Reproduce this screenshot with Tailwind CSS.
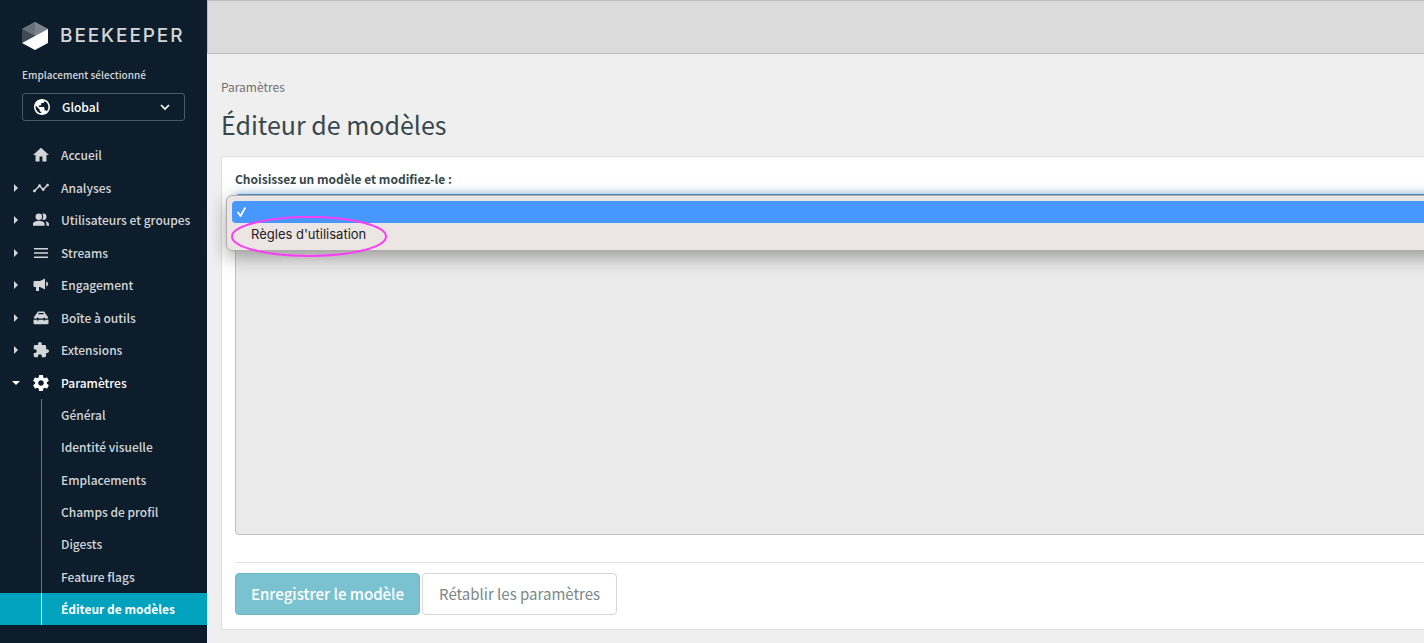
<!DOCTYPE html>
<html lang="fr">
<head>
    <meta charset="utf-8">
    <meta name="viewport" content="width=device-width, initial-scale=1">
    <title>Éditeur de modèles</title>
    <script src="https://cdn.jsdelivr.net/npm/@tailwindcss/browser@4"></script>
</head>
<body class="flex min-h-screen overflow-x-hidden bg-[#efefef] font-['Noto_Sans_CJK_SC',sans-serif]">
<aside class="w-[207px] shrink-0 bg-[#0d1d2b] text-[#d3d6d9]">
    <div class="flex items-center gap-[11px] pt-[21px] pl-[21px]">
        <svg class="w-7 h-[30px] shrink-0" viewBox="0 0 28 30">
            <path fill="#7c838b" d="M14 1 27 8 14 15 1 8z"/>
            <path fill="#69717a" d="M1 8 14 1v14z"/>
            <path fill="#3f4a55" d="M1 8l13 7L1 22z"/>
            <path fill="#7c838b" d="M14 1 27 8 14 15z"/>
            <path fill="#fff" d="M27 8v14L14 29 1 22z"/>
        </svg>
        <span class="font-['Inter',sans-serif] text-[19px] leading-7 font-medium tracking-widest">BEEKEEPER</span>
    </div>
    <div class="px-[22px] pt-4">
        <p class="text-[10px] leading-4 font-medium">Emplacement sélectionné</p>
        <button type="button" class="mt-[10px] flex h-7 w-full items-center rounded-[3px] border border-[#4c5863] pl-[11px] pr-[13px] text-xs leading-5 font-medium text-white">
            <svg class="w-4 h-4" viewBox="2 2 20 20" fill="currentColor"><path d="M12 2C6.480 2 2 6.480 2 12s4.480 10 10 10 10-4.480 10-10S17.520 2 12 2zm-1 17.930c-3.950-.49-7-3.850-7-7.930 0-.62.080-1.210.21-1.790L9 15v1c0 1.100.9 2 2 2v1.930zm6.900-2.540c-.26-.81-1-1.390-1.900-1.390h-1v-3c0-.55-.45-1-1-1H8v-2h2c.55 0 1-.45 1-1V7h2c1.100 0 2-.9 2-2v-.41c2.930 1.190 5 4.060 5 7.410 0 2.080-.8 3.970-2.100 5.390z"/></svg>
            <span class="ml-3 flex-1 text-left">Global</span>
            <svg class="w-3 h-3" viewBox="0 0 12 12" fill="none" stroke="currentColor" stroke-width="1.700"><path d="M2 4l4 4 4-4"/></svg>
        </button>
    </div>
    <nav class="pt-[18px] text-xs leading-5 font-medium">
        <ul class="grid h-[260px] auto-rows-fr">
            <li class="flex">
                <a href="#" class="flex flex-1 items-center pl-[33px]">
                    <svg class="w-4 h-4" viewBox="1 1 22 22" fill="currentColor"><path d="M10 21v-7h4v7h5.500v-9H23L12 2 1 12h3.500v9z"/></svg>
                    <span class="ml-3">Accueil</span>
                </a>
            </li>
            <li class="flex">
                <a href="#" class="flex flex-1 items-center pl-[13px]">
                    <svg class="w-1.5 h-2" viewBox="0 0 6 8" fill="currentColor"><path d="M1 0l4 4-4 4z"/></svg>
                    <svg class="ml-[14px] w-4 h-4" viewBox="1 1 22 22" fill="currentColor"><path d="M23 8c0 1.100-.9 2-2 2-.18 0-.35-.02-.51-.07l-3.560 3.550c.05.16.07.34.07.52 0 1.100-.9 2-2 2s-2-.9-2-2c0-.18.02-.36.07-.52l-2.550-2.550c-.16.05-.34.07-.52.07s-.36-.02-.52-.07l-4.550 4.560c.05.16.07.33.07.51 0 1.100-.9 2-2 2s-2-.9-2-2 .9-2 2-2c.18 0 .35.02.51.07l4.560-4.550C8.020 9.360 8 9.180 8 9c0-1.100.9-2 2-2s2 .9 2 2c0 .18-.02.36-.07.52l2.550 2.550c.16-.05.34-.07.52-.07s.36.02.52.07l3.550-3.560C19.020 8.350 19 8.180 19 8c0-1.100.9-2 2-2s2 .9 2 2z"/></svg>
                    <span class="ml-3">Analyses</span>
                </a>
            </li>
            <li class="flex">
                <a href="#" class="flex flex-1 items-center pl-[13px]">
                    <svg class="w-1.5 h-2" viewBox="0 0 6 8" fill="currentColor"><path d="M1 0l4 4-4 4z"/></svg>
                    <svg class="ml-[14px] w-4 h-4" viewBox="1 1 22 22" fill="currentColor"><circle cx="9" cy="7.500" r="4.500"/><path d="M9 13c-3 0-8 1.500-8 4.500V20h16v-2.500C17 14.500 12 13 9 13zM15 12a4.500 4.500 0 0 0 0-9l-1.200.2c1.600 2.500 1.600 6.100 0 8.600zM17.500 13.300c1.300 1 2 2.400 2 4.200V20H23v-2.500c0-2.300-2.900-3.700-5.500-4.200z"/></svg>
                    <span class="ml-3">Utilisateurs et groupes</span>
                </a>
            </li>
            <li class="flex">
                <a href="#" class="flex flex-1 items-center pl-[13px]">
                    <svg class="w-1.5 h-2" viewBox="0 0 6 8" fill="currentColor"><path d="M1 0l4 4-4 4z"/></svg>
                    <svg class="ml-[14px] w-4 h-4" viewBox="0 0 16 16" fill="currentColor"><path d="M1 3h14v1.500H1zM1 7.300h14v1.500H1zM1 11.600h14v1.500H1z"/></svg>
                    <span class="ml-3">Streams</span>
                </a>
            </li>
            <li class="flex">
                <a href="#" class="flex flex-1 items-center pl-[13px]">
                    <svg class="w-1.5 h-2" viewBox="0 0 6 8" fill="currentColor"><path d="M1 0l4 4-4 4z"/></svg>
                    <svg class="ml-[14px] w-4 h-4" viewBox="0 0 16 16" fill="currentColor"><path d="M1.500 4H7l5-2.500v11L7 10H6v4H3v-4H1.500Q.5 10 .5 9V5q0-1 1-1zM13.200 4.500c2.600.5 2.600 4.500 0 5z"/></svg>
                    <span class="ml-3">Engagement</span>
                </a>
            </li>
            <li class="flex">
                <a href="#" class="flex flex-1 items-center pl-[13px]">
                    <svg class="w-1.5 h-2" viewBox="0 0 6 8" fill="currentColor"><path d="M1 0l4 4-4 4z"/></svg>
                    <svg class="ml-[14px] w-4 h-4" viewBox="0 0 16 16" fill="currentColor"><path fill-rule="evenodd" d="M5 1.500h6L13.500 5q1.500 1 1.700 3.500H12V7.700h-1.500v.8h-5v-.8H4v.8H.8Q1 6 2.500 5zM5.700 3 5 4.200h6L10.300 3z"/><path d="M.5 9.700H4v.9h1.500v-.9h5v.9H12v-.9h3.500V13q0 1.300-1.200 1.300H1.700Q.5 14.300.5 13z"/></svg>
                    <span class="ml-3">Boîte à outils</span>
                </a>
            </li>
            <li class="flex">
                <a href="#" class="flex flex-1 items-center pl-[13px]">
                    <svg class="w-1.5 h-2" viewBox="0 0 6 8" fill="currentColor"><path d="M1 0l4 4-4 4z"/></svg>
                    <svg class="ml-[14px] w-4 h-4" viewBox="1 1 22 22" fill="currentColor"><path d="M20.500 11H19V7c0-1.100-.9-2-2-2h-4V3.500C13 2.120 11.880 1 10.500 1S8 2.120 8 3.500V5H4c-1.100 0-1.990.9-1.990 2v3.800H3.500c1.490 0 2.700 1.210 2.700 2.700s-1.210 2.700-2.700 2.700H2V20c0 1.100.9 2 2 2h3.800v-1.500c0-1.490 1.210-2.700 2.700-2.700s2.700 1.210 2.700 2.700V22H17c1.100 0 2-.9 2-2v-4h1.500c1.380 0 2.500-1.120 2.500-2.500S21.880 11 20.500 11z"/></svg>
                    <span class="ml-3">Extensions</span>
                </a>
            </li>
            <li class="flex">
                <a href="#" class="flex flex-1 items-center pl-3 text-white">
                    <svg class="w-2 h-1" viewBox="0 0 8 4" fill="currentColor"><path d="M0 0h8L4 4z"/></svg>
                    <svg class="ml-[13px] w-4 h-4" viewBox="2 2 20 20" fill="currentColor"><path d="M19.430 12.980c.04-.32.07-.64.07-.98s-.03-.66-.07-.98l2.110-1.650c.19-.15.24-.42.12-.64l-2-3.460c-.12-.22-.39-.3-.61-.22l-2.490 1c-.52-.4-1.080-.73-1.690-.98l-.38-2.650C14.460 2.180 14.250 2 14 2h-4c-.25 0-.46.18-.49.42l-.38 2.650c-.61.25-1.170.59-1.690.98l-2.490-1c-.23-.09-.49 0-.61.22l-2 3.460c-.13.22-.07.49.12.64l2.110 1.650c-.04.32-.07.65-.07.98s.03.66.07.98l-2.110 1.650c-.19.15-.24.42-.12.64l2 3.460c.12.22.39.3.61.22l2.490-1c.52.4 1.080.73 1.690.98l.38 2.650c.03.24.24.42.49.42h4c.25 0 .46-.18.49-.42l.38-2.650c.61-.25 1.170-.59 1.690-.98l2.490 1c.23.09.49 0 .61-.22l2-3.460c.12-.22.07-.49-.12-.64l-2.110-1.650zM12 15.500c-1.930 0-3.500-1.570-3.500-3.500s1.570-3.500 3.500-3.500 3.500 1.570 3.500 3.500-1.570 3.500-3.500 3.500z"/></svg>
                    <span class="ml-3">Paramètres</span>
                </a>
            </li>
        </ul>
        <ul class="grid h-[226px] auto-rows-fr">
            <li class="flex pl-[41px]"><a href="#" class="flex flex-1 items-center border-l border-[#66717a] pl-[19px]">Général</a></li>
            <li class="flex pl-[41px]"><a href="#" class="flex flex-1 items-center border-l border-[#66717a] pl-[19px]">Identité visuelle</a></li>
            <li class="flex pl-[41px]"><a href="#" class="flex flex-1 items-center border-l border-[#66717a] pl-[19px]">Emplacements</a></li>
            <li class="flex pl-[41px]"><a href="#" class="flex flex-1 items-center border-l border-[#66717a] pl-[19px]">Champs de profil</a></li>
            <li class="flex pl-[41px]"><a href="#" class="flex flex-1 items-center border-l border-[#66717a] pl-[19px]">Digests</a></li>
            <li class="flex pl-[41px]"><a href="#" class="flex flex-1 items-center border-l border-[#66717a] pl-[19px]">Feature flags</a></li>
            <li class="flex bg-[#00a2be] pl-[41px] font-bold text-white"><a href="#" class="flex flex-1 items-center border-l border-white pl-[19px]">Éditeur de modèles</a></li>
        </ul>
    </nav>
</aside>
<div class="min-w-0 flex-1 overflow-hidden">
    <header class="h-[54px] border-y border-l border-[#bcbcbc] bg-[#dbdbdb]"></header>
    <main class="-mr-8 pl-[14px] pt-[23px]">
        <p class="text-xs leading-5 text-[#6f6f6f]">Paramètres</p>
        <h1 class="mt-[9px] text-[25px] leading-9 text-[#37474c]">Éditeur de modèles</h1>
        <form class="mt-[14px] border border-[#dfdfdf] bg-white px-[13px] pt-3 pb-[14px]">
            <label for="template" class="block text-xs leading-5 font-bold text-[#37474c]">Choisissez un modèle et modifiez-le :</label>
            <div class="relative mt-[5px]">
                <select id="template" class="block h-[34px] w-full appearance-none rounded border border-[#4a96dc] bg-white shadow-[0_0_8px_#66afe999]">
                    <option></option>
                    <option>Règles d'utilisation</option>
                </select>
                <ul role="listbox" aria-label="Modèles" class="absolute top-px -left-[9px] right-0 rounded-md border border-[#b0acac] bg-[#ebe5e4] py-[5px] pl-[5px] font-['Inter',sans-serif] text-[13px] leading-[22px] text-[#222] shadow-[0_6px_18px_#00000059]">
                    <li role="option" aria-selected="true" class="flex h-[22px] items-center rounded-l bg-[#4797ff] pl-1 text-white">
                        <svg class="w-[11px] h-3" viewBox="0 0 11 12" fill="none" stroke="currentColor" stroke-width="1.800" stroke-linecap="round" stroke-linejoin="round"><path d="M2 6.500l2.500 3.500L9 2"/></svg>
                    </li>
                    <li role="option" aria-selected="false" class="h-[22px] pl-[19px]">Règles d'utilisation</li>
                </ul>
                <!-- highlight around the entry -->
                <svg class="absolute top-[21px] -left-1 w-[156px] h-[43px]" viewBox="0 0 156 43" fill="none" stroke="#fb3df5" stroke-width="2"><ellipse cx="78" cy="21.500" rx="77" ry="19.500"/></svg>
            </div>
            <textarea aria-label="Contenu du modèle" disabled class="mt-3 block h-[295px] w-full resize-none rounded border border-[#bfbfbf] bg-[#eaeaea]"></textarea>
            <div class="mt-[27px] flex gap-0.5 border-t border-[#dfdfdf] pt-[10px] text-[15px] leading-6">
                <button type="submit" class="h-[42px] rounded border border-[#71b8c7] bg-[#7bc2d0] px-[15px] font-medium text-white">Enregistrer le modèle</button>
                <button type="button" class="h-[42px] rounded border border-[#d6d6d6] bg-white px-4 text-[#7b8788]">Rétablir les paramètres</button>
            </div>
        </form>
    </main>
</div>
</body>
</html>
